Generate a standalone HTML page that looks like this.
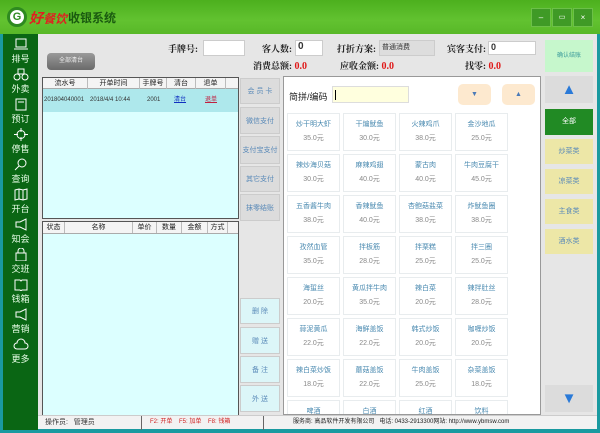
<!DOCTYPE html>
<html><head><meta charset="utf-8"><style>
*{margin:0;padding:0;box-sizing:border-box}
body{width:600px;height:433px;overflow:hidden;position:relative;background:#1a9aa0;font-family:"Liberation Sans","Noto Sans CJK SC",sans-serif;font-size:7px;color:#333}
div{position:absolute}
.t{white-space:nowrap}
#title{left:0;top:0;width:600px;height:34px;background:linear-gradient(#4cb01e,#62c230 60%,#58b828)}
#side{left:3px;top:34px;width:35px;height:396px;background:#0a6614}
.si{left:0;width:35px;text-align:center;color:#e8ffe8;font-size:9px}
.si svg{display:block;margin:0 auto 1px}
#main{left:38px;top:34px;width:559px;height:381px;background:#e6e6e6}
.tbl{background:#dcffff;border:1px solid #555}
.hd{top:0;left:0;right:0;height:11px;background:#f4f4f4;border-bottom:1px solid #aaa}
.hc{top:0;height:11px;border-right:1px solid #bbb;text-align:center;line-height:11px;font-size:7px;color:#222}
.mb{left:240px;width:40px;background:#dcdcdc;border:1px solid #ccc;color:#5a8ab8;text-align:center;font-size:7px}
.lb{background:#dcf6f8}
.card{width:53px;height:38px;background:#fff;border:1px solid #e8ecee;text-align:center;color:#4a8ab0;font-size:7px;line-height:14px;padding-top:4px}
.card span{color:#888;display:block}
.rb{left:545px;width:48px;text-align:center;font-size:7px}
.ylw{background:#ede7a7;color:#5a8ab8;height:25px;line-height:25px}
.red{color:#e01818;font-weight:bold;font-size:10px}
.lbl{font-family:"Liberation Serif","Noto Serif CJK SC",serif;font-size:9px;font-weight:bold;color:#222}
</style></head><body>
<div id="title">
 <div style="left:7px;top:7px;width:20px;height:20px;border-radius:50%;background:#fff;border:3px solid #2e8a20;color:#2e8a20;font-weight:bold;font-size:11px;text-align:center;line-height:14px">G</div>
 <div class="t" style="left:29px;top:8px;font-size:14px;font-weight:bold;color:#e02020;font-style:italic">好<span style="font-size:12px">餐饮</span></div>
 <div class="t" style="left:68px;top:9px;font-size:12px;color:#1a5a10;font-weight:bold">收银系统</div>
 <div style="left:531px;top:8px;width:20px;height:19px;background:#3f9a26;border:1px solid #6cc048;color:#fff;text-align:center;line-height:17px;font-size:8px">–</div>
 <div style="left:552px;top:8px;width:20px;height:19px;background:#3f9a26;border:1px solid #6cc048;color:#fff;text-align:center;line-height:17px;font-size:7px">▭</div>
 <div style="left:573px;top:8px;width:20px;height:19px;background:#3f9a26;border:1px solid #6cc048;color:#fff;text-align:center;line-height:17px;font-size:8px">×</div>
</div>
<div id="side">
 <div class="si" style="top:4px"><svg width="14" height="13"><rect x="2" y="1" width="10" height="8" fill="none" stroke="#fff"/><path d="M0 11h14" stroke="#fff"/></svg>排号</div>
 <div class="si" style="top:34px"><svg width="16" height="13"><circle cx="4" cy="9" r="3" fill="none" stroke="#fff"/><circle cx="12" cy="9" r="3" fill="none" stroke="#fff"/><rect x="5" y="1" width="6" height="5" fill="none" stroke="#fff"/></svg>外卖</div>
 <div class="si" style="top:64px"><svg width="14" height="13"><rect x="2" y="1" width="10" height="11" fill="none" stroke="#fff"/><path d="M4 4h6" stroke="#fff"/></svg>预订</div>
 <div class="si" style="top:94px"><svg width="14" height="13"><circle cx="7" cy="6.5" r="4" fill="none" stroke="#fff"/><path d="M7 0v4M7 9v4M0 6.5h4M10 6.5h4" stroke="#fff"/></svg>停售</div>
 <div class="si" style="top:124px"><svg width="14" height="13"><circle cx="8" cy="5" r="4" fill="none" stroke="#fff"/><path d="M5 8l-4 4" stroke="#fff"/></svg>查询</div>
 <div class="si" style="top:154px"><svg width="14" height="13"><path d="M1 2l4-1 4 1 4-1v10l-4 1-4-1-4 1z M5 1v10M9 2v10" fill="none" stroke="#fff"/></svg>开台</div>
 <div class="si" style="top:184px"><svg width="14" height="13"><path d="M2 4h4l6-3v11l-6-3H2z" fill="none" stroke="#fff"/></svg>知会</div>
 <div class="si" style="top:214px"><svg width="14" height="13"><rect x="2" y="5" width="10" height="8" fill="none" stroke="#fff"/><path d="M4 5V3a3 3 0 0 1 6 0v2" fill="none" stroke="#fff"/></svg>交班</div>
 <div class="si" style="top:244px"><svg width="14" height="13"><path d="M1 2h5l1 1 1-1h5v10H8l-1 1-1-1H1z" fill="none" stroke="#fff"/></svg>钱箱</div>
 <div class="si" style="top:274px"><svg width="14" height="13"><path d="M2 4h4l6-3v11l-6-3H2z" fill="none" stroke="#fff"/></svg>营销</div>
 <div class="si" style="top:304px"><svg width="16" height="13"><path d="M4 11a3 3 0 0 1 0-6a4 4 0 0 1 8 0a3 3 0 0 1 0 6z" fill="none" stroke="#fff"/></svg>更多</div>
</div>
<div id="main">
 <div style="left:9px;top:19px;width:48px;height:17px;border-radius:4px;background:linear-gradient(#9a9a9a,#6a6a6a);color:#eee;font-size:6px;text-align:center;line-height:17px">全部清台</div>
 <div class="t lbl" style="left:130px;top:8px">手牌号:</div>
 <div style="left:165px;top:6px;width:42px;height:16px;background:#fff;border:1px solid #ccc"></div>
 <div class="t lbl" style="left:224px;top:8px">客人数:</div>
 <div style="left:257px;top:6px;width:28px;height:16px;background:#fff;border:1px solid #ccc;font-size:10px;padding-left:2px;font-weight:bold">0</div>
 <div class="t lbl" style="left:299px;top:8px">打折方案:</div>
 <div style="left:341px;top:6px;width:56px;height:16px;background:#ddd;border:1px solid #ccc;font-size:7px;line-height:14px;padding-left:2px">普通消费</div>
 <div class="t lbl" style="left:409px;top:8px">宾客支付:</div>
 <div style="left:450px;top:7px;width:48px;height:14px;background:#fff;border:1px solid #ccc;font-size:9px;padding-left:2px;font-weight:bold">0</div>
 <div class="t lbl" style="left:215px;top:25px">消费总额:<span class="red"> 0.0</span></div>
 <div class="t lbl" style="left:302px;top:25px">应收金额:<span class="red"> 0.0</span></div>
 <div class="t lbl" style="left:427px;top:25px">找零:<span class="red"> 0.0</span></div>
</div>
<div style="left:545px;top:40px;width:48px;height:32px;background:#c6f7cc;color:#3a9a9a;font-size:6px;text-align:center;line-height:32px">确认结账</div>
<div class="tbl" style="left:42px;top:77px;width:197px;height:142px">
 <div class="hd"><div class="hc" style="left:0;width:45px">流水号</div><div class="hc" style="left:45px;width:52px">开单时间</div><div class="hc" style="left:97px;width:27px">手牌号</div><div class="hc" style="left:124px;width:29px">清台</div><div class="hc" style="left:153px;width:30px">退单</div></div>
 <div style="left:0;top:11px;width:195px;height:23px;background:#aee8ec;font-size:6px;line-height:23px">
  <div class="t" style="left:1px">201804040001</div><div class="t" style="left:47px">2018/4/4 10:44</div><div class="t" style="left:104px">2001</div><div class="t" style="left:131px;color:#1030c0;text-decoration:underline">清台</div><div class="t" style="left:162px;color:#c02040;text-decoration:underline">退单</div>
 </div>
</div>
<div class="tbl" style="left:42px;top:221px;width:197px;height:197px">
 <div class="hd" style="height:12px"><div class="hc" style="left:0;width:22px">状态</div><div class="hc" style="left:22px;width:68px">名称</div><div class="hc" style="left:90px;width:24px">单价</div><div class="hc" style="left:114px;width:25px">数量</div><div class="hc" style="left:139px;width:26px">金额</div><div class="hc" style="left:165px;width:20px">方式</div></div>
</div>
<div class="mb" style="top:78px;height:26px;line-height:26px">会 员 卡</div>
<div class="mb" style="top:107px;height:27px;line-height:27px">微信支付</div>
<div class="mb" style="top:136px;height:28px;line-height:28px">支付宝支付</div>
<div class="mb" style="top:166px;height:26px;line-height:26px">其它支付</div>
<div class="mb" style="top:194px;height:27px;line-height:27px">抹零结账</div>
<div class="mb lb" style="top:298px;height:26px;line-height:26px">删 除</div>
<div class="mb lb" style="top:327px;height:27px;line-height:27px">赠 送</div>
<div class="mb lb" style="top:356px;height:27px;line-height:27px">备 注</div>
<div class="mb lb" style="top:385px;height:27px;line-height:27px">外 送</div>
<div style="left:283px;top:76px;width:258px;height:339px;background:#fff;border:1px solid #999;overflow:hidden">
 <div class="t" style="left:5px;top:13px;font-size:9px;color:#222">简拼/编码</div>
 <div style="left:48px;top:9px;width:77px;height:17px;background:#ffffde;border:1px solid #ddd"><div style="left:2px;top:3px;width:1px;height:10px;background:#000"></div></div>
 <div style="left:174px;top:7px;width:33px;height:21px;border-radius:5px;background:#fde9cf;color:#4a7ab8;text-align:center;line-height:21px;font-size:7px">▼</div>
 <div style="left:218px;top:7px;width:33px;height:21px;border-radius:5px;background:#fde9cf;color:#4a7ab8;text-align:center;line-height:21px;font-size:7px">▲</div>
 <div class="card" style="left:3px;top:36px">炒干明大虾<span>35.0元</span></div>
 <div class="card" style="left:59px;top:36px">干煸鱿鱼<span>30.0元</span></div>
 <div class="card" style="left:115px;top:36px">火辣鸡爪<span>38.0元</span></div>
 <div class="card" style="left:171px;top:36px">金沙地瓜<span>25.0元</span></div>
 <div class="card" style="left:3px;top:77px">辣炒海贝菇<span>30.0元</span></div>
 <div class="card" style="left:59px;top:77px">麻辣鸡翅<span>40.0元</span></div>
 <div class="card" style="left:115px;top:77px">蒙古肉<span>40.0元</span></div>
 <div class="card" style="left:171px;top:77px">牛肉豆腐干<span>45.0元</span></div>
 <div class="card" style="left:3px;top:118px">五香酱牛肉<span>38.0元</span></div>
 <div class="card" style="left:59px;top:118px">香辣鱿鱼<span>40.0元</span></div>
 <div class="card" style="left:115px;top:118px">杏鲍菇盐菜<span>38.0元</span></div>
 <div class="card" style="left:171px;top:118px">炸鱿鱼圈<span>38.0元</span></div>
 <div class="card" style="left:3px;top:159px">孜然血管<span>35.0元</span></div>
 <div class="card" style="left:59px;top:159px">拌板筋<span>28.0元</span></div>
 <div class="card" style="left:115px;top:159px">拌栗糕<span>25.0元</span></div>
 <div class="card" style="left:171px;top:159px">拌三圈<span>25.0元</span></div>
 <div class="card" style="left:3px;top:200px">海蜇丝<span>20.0元</span></div>
 <div class="card" style="left:59px;top:200px">黄瓜拌牛肉<span>35.0元</span></div>
 <div class="card" style="left:115px;top:200px">辣白菜<span>20.0元</span></div>
 <div class="card" style="left:171px;top:200px">辣拌肚丝<span>28.0元</span></div>
 <div class="card" style="left:3px;top:241px">蒜泥黄瓜<span>22.0元</span></div>
 <div class="card" style="left:59px;top:241px">海鲜盖饭<span>22.0元</span></div>
 <div class="card" style="left:115px;top:241px">韩式炒饭<span>20.0元</span></div>
 <div class="card" style="left:171px;top:241px">咖喱炒饭<span>20.0元</span></div>
 <div class="card" style="left:3px;top:282px">辣白菜炒饭<span>18.0元</span></div>
 <div class="card" style="left:59px;top:282px">蘑菇盖饭<span>22.0元</span></div>
 <div class="card" style="left:115px;top:282px">牛肉盖饭<span>25.0元</span></div>
 <div class="card" style="left:171px;top:282px">杂菜盖饭<span>18.0元</span></div>
 <div class="card" style="left:3px;top:323px">啤酒<span>5.0元</span></div>
 <div class="card" style="left:59px;top:323px">白酒<span>5.0元</span></div>
 <div class="card" style="left:115px;top:323px">红酒<span>5.0元</span></div>
 <div class="card" style="left:171px;top:323px">饮料<span>5.0元</span></div>
</div>
<div class="rb" style="top:76px;height:27px;background:#dcdcdc;color:#2a7ad8;font-size:15px;line-height:27px">▲</div>
<div class="rb" style="top:109px;height:26px;background:#218a24;color:#fff;line-height:26px">全部</div>
<div class="rb ylw" style="top:139px">炒菜类</div>
<div class="rb ylw" style="top:169px">凉菜类</div>
<div class="rb ylw" style="top:199px">主食类</div>
<div class="rb ylw" style="top:229px">酒水类</div>
<div class="rb" style="top:385px;height:27px;background:#dcdcdc;color:#2a7ad8;font-size:15px;line-height:27px">▼</div>
<div style="left:38px;top:415px;width:559px;height:14px;background:#f2f2f2;border-top:1px solid #ccc;font-size:7px;line-height:13px">
 <div class="t" style="left:7px">操作员:&nbsp;&nbsp;&nbsp;管理员</div>
 <div style="left:103px;top:0;width:1px;height:14px;background:#666"></div>
 <div class="t" style="left:112px;color:#d02020;font-size:6px">F2: 开单&nbsp;&nbsp;&nbsp;&nbsp;F5: 加单&nbsp;&nbsp;&nbsp;&nbsp;F8: 钱箱</div>
 <div style="left:225px;top:0;width:1px;height:14px;background:#666"></div>
 <div class="t" style="left:255px;font-size:6px;color:#222">服务商: 高品软件开发有限公司&nbsp;&nbsp;&nbsp;电话: 0433-2913300网站: http://www.ybmsw.com</div>
</div>
</body></html>
